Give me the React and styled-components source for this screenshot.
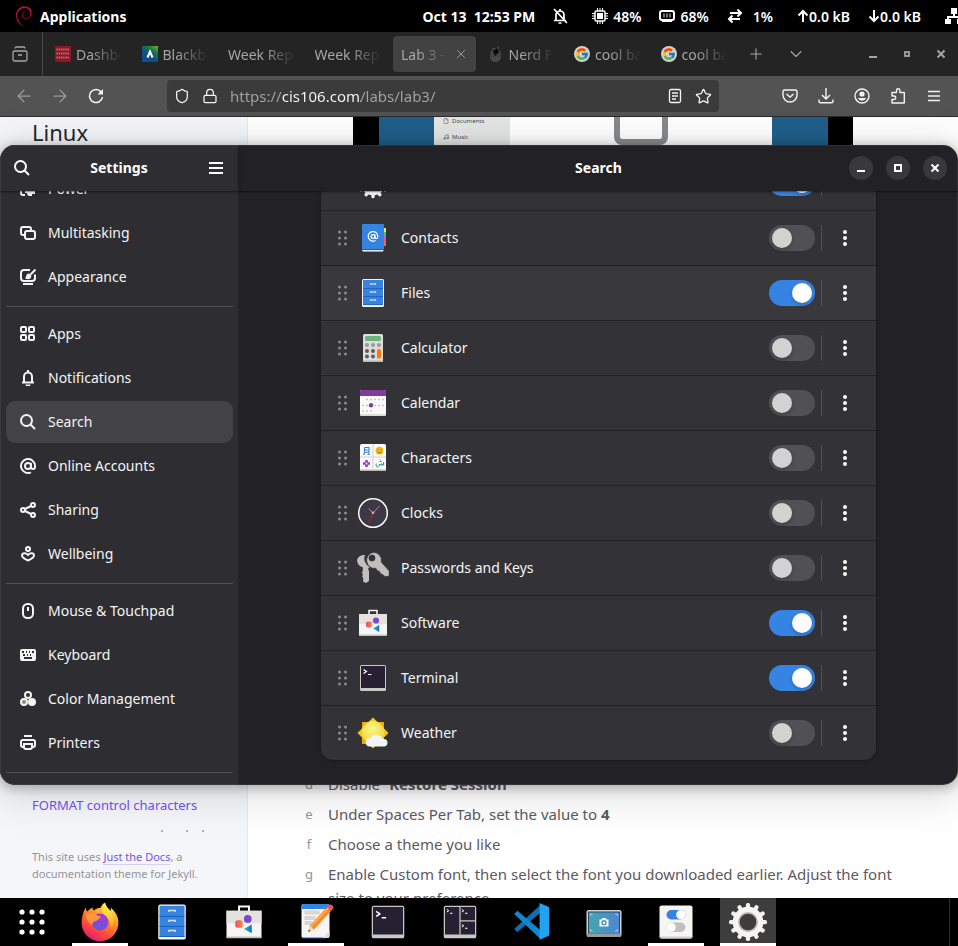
import React from 'react';
import styled, { createGlobalStyle, css } from 'styled-components';
import { ArrowLeft, ArrowRight, Shield, Lock, Star, Plus, ChevronDown, X, File, Music } from 'lucide-react';
import { SiDebian } from 'react-icons/si';
import { FcGoogle } from 'react-icons/fc';

const GlobalStyle = createGlobalStyle`
  * { box-sizing: border-box; }
  body { margin: 0; background: #000; font-family: "Noto Sans", sans-serif; font-size: 14px; }
  button { font: inherit; color: inherit; background: none; border: 0; padding: 0; cursor: pointer; }
  a { color: inherit; text-decoration: none; }
  ul, ol { list-style: none; margin: 0; padding: 0; }
  h1, h2, p { margin: 0; }
  svg { display: block; flex: none; }
`;

/* ---------- Desktop ---------- */

const Desktop = styled.div`
  position: relative;
  display: flex;
  flex-direction: column;
  height: 100vh;
  overflow: hidden;
`;

const TopBar = styled.header`
  display: flex;
  flex: none;
  align-items: center;
  height: 32px;
  padding-left: 14px;
  overflow: hidden;
  background: #000;
  color: #fff;
  font-weight: 600;
  white-space: nowrap;
`;

const Activities = styled.button`
  display: flex;
  align-items: center;
  gap: 6px;
  font-weight: 700;
`;

const Clock = styled.time`
  margin-left: auto;
  font-weight: 700;
  white-space: pre;
`;

const Indicators = styled.div`
  display: flex;
  align-items: center;
  gap: 18px;
  margin-left: ${(p) => p.$before}px;
`;

const Indicator = styled.span`
  display: flex;
  align-items: center;
  gap: ${(p) => p.$gap ?? 5}px;
`;

const NetworkIndicator = styled.div`
  width: 13px;
  margin-left: 24px;
  overflow: hidden;
`;

/* ---------- Browser ---------- */

const Browser = styled.section`
  display: flex;
  flex: 1;
  flex-direction: column;
  min-height: 0;
  background: #fff;
`;

const TabStrip = styled.div`
  display: flex;
  flex: none;
  align-items: center;
  height: 44px;
  background: #242424;
  color: #a5a5a5;
`;

const FirefoxView = styled.button`
  display: flex;
  align-items: center;
  align-self: stretch;
  justify-content: center;
  width: 43px;
  padding-right: 3px;
  border-right: 1px solid #484848;
`;

const Tabs = styled.div`
  display: flex;
  flex: 1;
  min-width: 0;
  padding-left: 2px;
`;

const Tab = styled.button`
  display: flex;
  flex: 1 1 0;
  align-items: center;
  gap: 5px;
  min-width: 0;
  height: 36px;
  margin: 0 2px;
  padding: 0 8px;
  border-radius: 4px;
  background: ${(p) => (p.$active ? '#424242' : 'transparent')};
`;

const TabTitle = styled.span`
  flex: 1;
  min-width: 0;
  overflow: hidden;
  text-align: left;
  white-space: nowrap;
  mask-image: linear-gradient(to left, transparent 0, #000 32px);
`;

const StripButton = styled.button`
  display: flex;
  align-items: center;
  justify-content: center;
  width: ${(p) => p.$width}px;
  height: 36px;
`;

const StripControls = styled.div`
  display: flex;
  flex: none;
  gap: 2px;
`;

const WindowButtons = styled.div`
  display: flex;
  flex: none;
  margin-left: 41px;
`;

const NavBar = styled.div`
  display: flex;
  flex: none;
  align-items: center;
  height: 41px;
  padding: 0 6px;
  border-bottom: 1px solid #2b2b2b;
  background: #535353;
  color: #f4f4f4;
`;

const ToolButton = styled.button`
  display: flex;
  align-items: center;
  justify-content: center;
  width: 36px;
  height: 32px;
  opacity: ${(p) => (p.$dim ? 0.45 : 1)};
`;

const AddressBar = styled.div`
  display: flex;
  flex: 1;
  align-items: center;
  gap: 12px;
  height: 32px;
  margin: 0 53px;
  padding: 0 7px;
  border-radius: 4px;
  background: #3b3b3b;
`;

const AddressInput = styled.input`
  flex: 1;
  min-width: 0;
  padding: 0;
  border: 0;
  outline: 0;
  background: linear-gradient(90deg, #a3a3a3 52px, #fbfbfe 52px, #fbfbfe 131px, #a3a3a3 131px);
  -webkit-background-clip: text;
  background-clip: text;
  color: transparent;
  font: inherit;
  font-size: 15px;
`;

/* ---------- Web page ---------- */

const WebPage = styled.div`
  display: flex;
  flex: 1;
  min-height: 0;
  overflow: hidden;
`;

const SiteSidebar = styled.aside`
  display: flex;
  flex: none;
  flex-direction: column;
  width: 248px;
  padding: 0 32px;
  border-right: 1px solid #e9e8f0;
  background: #f5f6fa;
`;

const SiteTitle = styled.h2`
  color: #27262b;
  font-size: 22px;
  font-weight: 400;
  line-height: 30px;
`;

const SiteNav = styled.nav`
  display: flex;
  flex: 1;
  flex-direction: column;
  justify-content: flex-end;
  min-height: 0;
  color: #7253ed;
  font-size: 13px;
  line-height: 20px;
  white-space: nowrap;
`;

const NavCut = styled.svg`
  margin-top: 15px;
`;

const SiteFooter = styled.footer`
  flex: none;
  padding: 16px 0;
  color: #959396;
  font-size: 11px;
  line-height: 17px;
  white-space: nowrap;
`;

const FooterLink = styled.a`
  border-bottom: 1px solid #d5d0ee;
  color: #7253ed;
`;

const Article = styled.main`
  flex: 1;
  min-width: 0;
  padding: 0 48px 0 57px;
  color: #5c5962;
  font-size: 15px;
  line-height: 24px;
`;

const Figure = styled.figure`
  display: flex;
  width: 500px;
  height: 640px;
  margin: 0 0 15px 48px;
  background: #000;
`;

const Wallpaper = styled.div`
  flex: 0 0 ${(p) => p.$width}px;
  margin-left: ${(p) => p.$before ?? 0}px;
  background: #1f5f8a;
`;

const FigureFiles = styled.div`
  flex: 0 0 76px;
  padding: 0 9px;
  background: #e4e6e5;
  color: #4a4a4a;
  font-size: 6px;
  line-height: 8px;
`;

const FigurePlace = styled.div`
  display: flex;
  align-items: center;
  gap: 3px;
  margin-bottom: 8px;
`;

const FigureSheet = styled.div`
  display: flex;
  flex: 0 0 262px;
  justify-content: center;
  background: #fff;
`;

const FigureFrame = styled.div`
  width: 54px;
  height: 28px;
  border: 6px solid #87898a;
  border-top: 0;
  border-radius: 0 0 8px 8px;
`;

const Steps = styled.ol`
  padding-left: 23px;
`;

const Step = styled.li`
  display: grid;
  grid-template-columns: 0 1fr;
  margin-bottom: 6px;
`;

const StepMark = styled.span`
  display: flex;
  justify-content: center;
  width: 8px;
  margin-left: -23px;
  color: #959396;
  font-size: 13px;
`;

/* ---------- Settings window ---------- */

const SettingsWindow = styled.section`
  position: absolute;
  top: 145px;
  right: 0;
  bottom: 161px;
  left: 0;
  display: flex;
  overflow: hidden;
  border-radius: 15px;
  background: #222226;
  color: #fff;
`;

const WindowShadow = styled.div`
  position: absolute;
  top: 145px;
  right: 0;
  bottom: 161px;
  left: 0;
  border-radius: 15px;
  box-shadow: 0 2px 12px 1px rgba(0, 0, 0, 0.28), 0 6px 40px 8px rgba(0, 0, 0, 0.12);
`;

const WindowEdge = styled.div`
  position: absolute;
  inset: 0;
  border-radius: 15px;
  box-shadow: inset 0 0 0 1px rgba(255, 255, 255, 0.07);
  pointer-events: none;
`;

const Sidebar = styled.aside`
  display: flex;
  flex: 0 0 239px;
  flex-direction: column;
  border-right: 1px solid #252529;
  background: #2e2e32;
`;

const Pane = styled.div`
  display: flex;
  flex: 1;
  flex-direction: column;
  min-width: 0;
`;

const HeaderBar = styled.header`
  position: relative;
  z-index: 1;
  display: grid;
  flex: none;
  grid-template-columns: 1fr auto 1fr;
  align-items: center;
  height: 46px;
  padding: 0 ${(p) => p.$side}px;
  box-shadow: 0 1px 1px rgba(0, 0, 0, 0.3), 0 2px 4px rgba(0, 0, 0, 0.12);
`;

const HeaderTitle = styled.h1`
  grid-column: 2;
  padding-bottom: 2px;
  font-size: 14px;
  font-weight: 700;
`;

const HeaderButton = styled.button`
  display: flex;
  align-items: center;
  justify-content: center;
  width: 34px;
  height: 34px;
  justify-self: ${(p) => p.$side};
`;

const WindowControls = styled.div`
  display: flex;
  gap: 13px;
  justify-self: end;
`;

const RoundButton = styled.button`
  display: flex;
  align-items: center;
  justify-content: center;
  width: 24px;
  height: 24px;
  border-radius: 50%;
  background: #39393c;
`;

const scrolledToEnd = css`
  display: flex;
  flex: 1;
  flex-direction: column;
  justify-content: flex-end;
  min-height: 0;
  overflow: hidden;
`;

const NavScroller = styled.nav`
  ${scrolledToEnd}
  padding: 0 5px 12px 6px;
`;

const NavGroup = styled.ul`
  display: grid;
  flex: none;
  gap: 2px;
  padding: 6px 0 8px;
  border-bottom: 1px solid #505054;
`;

const NavLink = styled.a`
  display: flex;
  align-items: center;
  gap: 12px;
  height: 42px;
  padding: 0 14px;
  border-radius: 9px;
  background: ${(p) => (p.$active ? '#434347' : 'transparent')};
  color: #f4f4f4;
`;

const NavText = styled.span`
  padding-bottom: 2px;
`;

const PaneScroller = styled.div`
  ${scrolledToEnd}
  align-items: center;
  padding: 0 24px 25px;
`;

const ResultList = styled.ul`
  flex: none;
  width: 100%;
  max-width: 555px;
  overflow: hidden;
  border-radius: 12px;
  background: #333337;
  box-shadow: 0 0 0 1px rgba(0, 0, 6, 0.1), 0 1px 3px 1px rgba(0, 0, 6, 0.1);
`;

const ResultRow = styled.li`
  display: flex;
  align-items: center;
  height: 55px;
  padding: 0 14px;
  background: ${(p) => (p.$hover ? '#39393d' : 'transparent')};
  & + & { border-top: 1px solid #212125; }
`;

const DragHandle = styled.button`
  display: flex;
  justify-content: center;
  width: 16px;
  margin-right: 6px;
  color: #8b8b8e;
  cursor: grab;
`;

const AppIcon = styled.svg`
  width: 32px;
  height: 32px;
`;

const RowLabel = styled.label`
  flex: 1;
  margin-left: 12px;
  padding-bottom: 2px;
  color: #f4f4f4;
`;

const Switch = styled.input`
  appearance: none;
  display: flex;
  flex: none;
  align-items: center;
  width: 46px;
  height: 26px;
  margin: 0;
  padding: 3px;
  border-radius: 13px;
  background: #515155;
  &::before {
    content: '';
    width: 20px;
    height: 20px;
    border-radius: 50%;
    background: #d2d2d2;
    box-shadow: 0 2px 4px rgba(0, 0, 6, 0.2);
  }
  &:checked { background: #3584e4; justify-content: flex-end; }
  &:checked::before { background: #fff; }
`;

const RowRule = styled.span`
  width: 1px;
  height: 26px;
  margin: 0 6px;
  background: #505054;
`;

const MenuButton = styled.button`
  display: flex;
  align-items: center;
  justify-content: center;
  width: 34px;
  height: 34px;
`;

/* ---------- Dock ---------- */

const Dock = styled.footer`
  display: flex;
  flex: none;
  gap: 16px;
  height: 48px;
  padding-right: 8px;
  background: #000;
`;

const DockButton = styled.button`
  display: flex;
  align-items: center;
  justify-content: center;
  width: 56px;
  height: 48px;
  border-bottom: 3px solid ${(p) => (p.$running ? '#fff' : 'transparent')};
  border-top: 3px solid ${(p) => (p.$focused ? '#3d3d3d' : 'transparent')};
  background: ${(p) => (p.$focused ? '#3d3d3d' : 'transparent')};
  background-clip: padding-box;
`;

const ShowAppsButton = styled(DockButton)`
  padding-left: 8px;
`;

const DockIcon = styled.svg`
  width: 40px;
  height: 40px;
`;

const DockEnd = styled.span`
  width: 1px;
  margin-left: auto;
  background: #2b2b2b;
`;

/* ---------- Symbolic icons, 16 x 16 ---------- */

const Sym = ({ children, size = 16, w = 2 }) => (
  <svg width={size} height={size} viewBox="0 0 16 16" fill="none" stroke="currentColor" strokeWidth={w} aria-hidden="true">
    {children}
  </svg>
);

const SearchSym = () => <Sym><circle cx="6.5" cy="6.5" r="5.5" /><path d="M10.5 10.5 15 15" /></Sym>;
const HamburgerSym = () => <Sym><path d="M1 3h14M1 8h14M1 13h14" /></Sym>;
const MinimizeSym = () => <Sym><path d="M4 11h8" /></Sym>;
const MaximizeSym = () => <Sym><rect x="5" y="5" width="6" height="6" /></Sym>;
const CloseSym = () => <Sym><path d="m4.5 4.5 7 7m0-7-7 7" /></Sym>;

const navIcons = {
  power: <Sym><path d="M4 2H3a2 2 0 0 0-2 2v8a2 2 0 0 0 2 2h2M9 2h2" /><path d="M5 11h2a4 4 0 0 1 4-3v2h4M11 12h4" /><path d="M7 10h5v5h-3a3 3 0 0 1-2-3z" fill="currentColor" stroke="none" /></Sym>,
  multitasking: <Sym><rect x="5" y="6" width="10" height="8" rx="2" /><path d="M4 10H3a2 2 0 0 1-2-2V4a2 2 0 0 1 2-2h6a2 2 0 0 1 2 2v1" /></Sym>,
  appearance: <Sym><path d="M10 1H4a3 3 0 0 0-3 3v5a3 3 0 0 0 3 3h8a3 3 0 0 0 3-3V5.500" /><path d="M3 15h10" /><path d="M15.500.5 10.500 5.500" /><path d="M5 9.500c1.500-.5.500-4.500 3.500-5a2.800 2.800 0 0 1 2.800 2.500c0 3.300-3.300 4-6.300 2.500z" fill="currentColor" stroke="none" /></Sym>,
  apps: <Sym><rect x="1" y="1" width="5" height="5" rx="1" /><rect x="9" y="1" width="5" height="5" rx="1" /><rect x="1" y="9" width="5" height="5" rx="1" /><rect x="9" y="9" width="5" height="5" rx="1" /></Sym>,
  notifications: <Sym><path d="M2 12.500h12" /><path d="M4 12V6.500a4 4 0 0 1 8 0V12" /><path d="M8 0v2" /><path d="M5.500 14.500h5a2.500 2 0 0 1-5 0z" fill="currentColor" stroke="none" /></Sym>,
  search: <SearchSym />,
  accounts: <Sym><circle cx="8" cy="8" r="3" /><path d="M11 5v4a1.500 1.500 0 0 0 4 0V8a7 7 0 1 0-4 6.300" /></Sym>,
  sharing: <Sym><circle cx="3" cy="8" r="2" /><circle cx="13" cy="3" r="2" /><circle cx="13" cy="13" r="2" /><path d="m5 7 6-3M5 9l6 3" /></Sym>,
  wellbeing: <Sym><circle cx="8" cy="3" r="2" /><path d="M8 14.500c-3-1.500-6-2.500-6-5 0-3 4-3 6-.5 2-2.500 6-2.500 6 .5 0 2.500-3 3.500-6 5z" /></Sym>,
  mouse: <Sym><rect x="3" y="1" width="10" height="14" rx="4.500" /><path d="M8 4v4" /></Sym>,
  keyboard: <Sym w={1.5}><path fillRule="evenodd" stroke="none" fill="currentColor" d="M2 2h12a2 2 0 0 1 2 2v8a2 2 0 0 1-2 2H2a2 2 0 0 1-2-2V4c0-1.100.9-2 2-2zM2 4v2h2V4zm4 0v2h1V4zm3 0v2h1V4zm3 0v2h2V4zM3 7v2h2V7zm4 0v2h1V7zm3 0v2h1V7zM4 10v2h8v-2z" /></Sym>,
  color: <Sym><circle cx="8" cy="4" r="3" /><circle cx="4" cy="11" r="3" fill="#8b8b8e" /><circle cx="12" cy="11" r="4" fill="currentColor" stroke="none" /></Sym>,
  printers: <Sym><path d="M4 1h8M4 12H3a2 2 0 0 1-2-2V7a2 2 0 0 1 2-2h10a2 2 0 0 1 2 2v3a2 2 0 0 1-2 2h-1" /><path d="M4 9h8v3a2 2 0 0 1-2 2H6a2 2 0 0 1-2-2z" /></Sym>,
};

/* ---------- Application artwork, 32 x 32 ---------- */

const Gear = () => (
  <g>
    <g fill="#f2f1ef">
      {Array.from({ length: 12 }, (_, i) => (
        <rect key={i} x="14.300" y="0.800" width="3.400" height="6" rx="1.400" transform={`rotate(${i * 30} 16 16)`} />
      ))}
    </g>
    <circle cx="16" cy="16" r="9.500" fill="none" stroke="#f6f5f4" strokeWidth="5.500" />
    <circle cx="16" cy="16" r="7.300" fill="#3d3d3d" stroke="#b9b7b3" strokeWidth="1.300" />
  </g>
);

const FilesArt = () => (
  <g>
    <rect x="5" y="2" width="22" height="28" rx="1.500" fill="#f6f5f4" />
    <path d="M6 3h20v25H6z" fill="#3584e4" />
    <path d="M6 11.500h20M6 19.500h20M6 27.600h20" stroke="#1a5fb4" strokeWidth=".8" />
    <path d="M13.500 8V6.800h5V8M13.500 16v-1.200h5V16M13.500 24v-1.200h5V24" stroke="#deddda" strokeWidth="1.200" fill="none" />
  </g>
);

const SoftwareArt = () => (
  <g>
    <defs>
      <linearGradient id="swBall" x2="0" y2="1"><stop offset="0" stopColor="#9141ac" /><stop offset="1" stopColor="#5b53f0" /></linearGradient>
      <linearGradient id="swBox"><stop offset="0" stopColor="#f5486a" /><stop offset="1" stopColor="#ff8a3c" /></linearGradient>
      <linearGradient id="swCone"><stop offset="0" stopColor="#1fc8b4" /><stop offset="1" stopColor="#1a63e0" /></linearGradient>
    </defs>
    <path d="M12 8V3.500h8V8" fill="none" stroke="#f6f5f4" strokeWidth="1.600" />
    <path d="M2 7h28v21.500H2z" fill="#f6f5f4" />
    <path d="M2 7h28v10H2z" fill="#e3e2df" />
    <path d="M2 27.500h28V29H2z" fill="#c4c2bd" />
    <circle cx="19" cy="13.500" r="3.100" fill="url(#swBall)" />
    <rect x="9" y="14.500" width="6" height="6" rx="2" fill="url(#swBox)" />
    <path d="M16 21.500l6.200-3.500v7z" fill="url(#swCone)" />
  </g>
);

const TerminalArt = ({ split }) => (
  <g>
    <rect x="3" y="3" width="26" height="26" rx="1.500" fill="#c9c8c4" />
    <path d="M4 4h24v22H4z" fill="#272032" />
    <g fill="none" stroke="#fff">
      {split ? (
        <>
          <path d="M16 4v22M16 15h12" stroke="#c9c8c4" />
          <path d="m5.500 6 1.500 1-1.500 1M8 9h2M17.500 6l1.500 1-1.500 1M20 9h2M17.500 18l1.500 1-1.500 1M20 21h2" strokeWidth=".8" />
        </>
      ) : (
        <path d="m6.500 7.500 3 2-3 2M11 12.500h3.500" strokeWidth="1.200" />
      )}
    </g>
  </g>
);

const appArt = {
  settings: <Gear />,
  contacts: (
    <g>
      <path d="M26 6h3v5h-3z" fill="#f8e45c" /><path d="M26 10h3v5h-3z" fill="#33d17a" />
      <path d="M26 14h3v5h-3z" fill="#c061cb" /><path d="M26 18h3v6h-3z" fill="#f66151" />
      <rect x="5" y="2" width="22" height="27.500" rx="1" fill="#3584e4" />
      <path d="M5 28h21v1.500H6z" fill="#deebfa" /><path d="M5 27h21.500v1H5z" fill="#1a5fb4" />
      <g fill="none" stroke="#fff" strokeWidth="1.200"><circle cx="16" cy="14.500" r="1.900" /><path d="M18 12.500v3c0 1.500 2.800 1.500 2.800-1a4.800 4.800 0 1 0-2.300 4" /></g>
    </g>
  ),
  files: <FilesArt />,
  calculator: (
    <g>
      <rect x="6" y="2" width="20" height="28" rx="1.500" fill="#deddda" /><path d="M6 28.500h20V30H6z" fill="#b9b7b3" />
      <rect x="8" y="4" width="16" height="5" rx="1.500" fill="#6db380" />
      <g fill="#9a9996"><circle cx="10" cy="13" r="2" /><circle cx="16" cy="13" r="2" /><circle cx="22" cy="13" r="2" /></g>
      <g fill="#5e5c64"><circle cx="10" cy="19" r="2" /><circle cx="16" cy="19" r="2" /><circle cx="10" cy="24.500" r="2" /><circle cx="16" cy="24.500" r="2" /></g>
      <rect x="20" y="17" width="4" height="9.500" rx="1.500" fill="#ff7800" />
    </g>
  ),
  calendar: (
    <g>
      <rect x="3" y="3" width="26" height="26" rx="1.500" fill="#fafafa" /><path d="M3 27.500h26v1H3z" fill="#c0bfbc" />
      <path d="M3 9V4.500A1.500 1.500 0 0 1 4.500 3h23A1.500 1.500 0 0 1 29 4.500V9z" fill="#813d9c" />
      <path d="M9 12.500h19M5 18.500h23M5 24h10" stroke="#c9c8c6" strokeWidth="1.600" strokeDasharray="2 2" />
      <circle cx="14" cy="18.300" r="2.200" fill="#813d9c" />
    </g>
  ),
  characters: (
    <g>
      <rect x="3" y="2" width="26" height="27" rx="1.500" fill="#fafafa" /><path d="M3 27.500h26V29H3z" fill="#b9b7b3" />
      <path d="M16 2v26M3 15h26" stroke="#d4d3d0" />
      <path d="M7.500 5.500H12v7h-1.500M7.500 5.500v5q0 2-1.500 2M7.500 8H12M7.500 10.300H12" stroke="#3584e4" strokeWidth="1.100" fill="none" />
      <circle cx="22.500" cy="8.700" r="3.900" fill="#f5b911" /><path d="M20.500 10q2 2 4 0M21 7.300v1M24 7.300v1" stroke="#a66b00" fill="none" />
      <path d="M9.500 18v7M6 21.500h7" stroke="#9141ac" strokeWidth="2.600" /><circle cx="9.500" cy="21.500" r=".9" fill="#fff" />
      <path d="M19.300 21.500c-1 4 2 4.500 3 1.500l.5-1 .5 1h1.500v-1.500l.3 1.500h1.500v-3" stroke="#26a269" fill="none" /><path d="M22.500 19.500h2M23.200 18h.8" stroke="#26a269" />
    </g>
  ),
  clocks: (
    <g>
      <circle cx="16" cy="16" r="14.300" fill="#3d3846" stroke="#fafafa" strokeWidth="1.500" />
      <path d="M16 16 11.500 11.500M16 16l6.500-7" stroke="#9a9996" /><path d="m16.500 15-4 9.500" stroke="#c01c28" /><circle cx="16" cy="15.700" r="1.300" fill="#c0bfbc" />
    </g>
  ),
  keys: (
    <g stroke="none" fill="#c0bfbd">
      <path d="M8.500 3C3 2.500-.5 6 .2 9.500c.6 3 2.500 5 5.600 5.800V19l-1 1.500 1 1.500-.5 2.500 1 2.500-.3 2.500 3 1.500 3-2V19l-1-2 1.500-2A9.500 9.500 0 0 1 8 3z" />
      <path fillRule="evenodd" stroke="#333337" strokeWidth=".8" d="M16.500.3a8 8 0 0 1 7.800 9.800L32.300 19v5.200l-4.300.5-2.500-2.300-2-.5-1-2.500-2.500-.8-1-2.200A8 8 0 1 1 16.500.3zM15 3a3 3 0 1 0 0 6 3 3 0 0 0 0-6z" />
    </g>
  ),
  software: <SoftwareArt />,
  terminal: <TerminalArt />,
  weather: (
    <g>
      <defs><radialGradient id="sun" cx=".45" cy=".35"><stop offset="0" stopColor="#fbf38a" /><stop offset="1" stopColor="#f3e04b" /></radialGradient></defs>
      <path d="M5 5h22v22H5z" fill="#f5a70a" /><path d="M16 .5 31.500 16 16 31.500.5 16z" fill="#f6c815" />
      <circle cx="16" cy="15" r="11" fill="url(#sun)" />
      <path d="M13 29.500a4 4 0 0 1-.5-8c1-.3 1.500-.8 2-1.800a6.500 6.500 0 0 1 10 .5c.8 1.200 1.500 1.500 3 1.800a3.800 3.800 0 0 1-.5 7.500z" fill="#f0f5fb" />
    </g>
  ),
};

/* ---------- Dock artwork ---------- */

const GridArt = () => (
  <svg width="26" height="26" viewBox="0 0 26 26" fill="#fff" aria-hidden="true">
    {[3, 13, 23].map((y) => [3, 13, 23].map((x) => <circle key={`${x}-${y}`} cx={x} cy={y} r="2.600" />))}
  </svg>
);

const FirefoxArt = () => (
  <g>
    <defs>
      <linearGradient id="fxBody" x1=".8" y1="0" x2=".25" y2="1"><stop offset="0" stopColor="#fff44f" /><stop offset=".35" stopColor="#ff9a1f" /><stop offset=".7" stopColor="#ff4a3a" /><stop offset="1" stopColor="#e3157b" /></linearGradient>
      <linearGradient id="fxGlobe" x1=".5" y1="0" x2=".4" y2="1"><stop offset="0" stopColor="#b136d9" /><stop offset="1" stopColor="#5a5ae0" /></linearGradient>
      <linearGradient id="fxTail" x1=".4" y1="0" x2=".6" y2="1"><stop offset="0" stopColor="#fff24e" /><stop offset="1" stopColor="#ffb02e" /></linearGradient>
    </defs>
    <path fill="url(#fxBody)" d="M5 5c0 2 .5 3 1.500 4C8 7.500 9.500 6 11.500 5.500c0 1.500.5 2 1.500 2.500C14.500 6.500 16.500 5.500 19 5.500c1-2.500 2.500-4 4-5 .5 4 3 5.500 5.500 8 .5-1.500.5-2.500 0-3.500 4.500 4 7.500 9 7.500 14.500A17.500 17.500 0 1 1 1 20c0-5 1.500-11 4-15z" />
    <path fill="url(#fxTail)" d="M23.500.5c.5 4.500 4 6 6 9.500 3 5 2.500 11-1 15 1-5-1-8-4-10-4-2.500-6-8-1-14.500z" />
    <circle cx="18.500" cy="19" r="8" fill="url(#fxGlobe)" />
    <path fill="#ff9640" d="M5.500 11c4-1.500 9-1 10.500 2 1.500.5 3 .5 3.500 1-1 2-3.500 2.500-4.500 4-1.500 0-3 .5-4.500 4C7.500 19.500 5 16 5.500 11z" />
    <path d="M13.500 9.500C15.500 7.500 18 6.500 19 6.500c-1 1.500-1 2.500-.5 4z" fill="#ffb43c" />
  </g>
);

const EditorArt = () => (
  <g>
    <rect x="2.500" y="2" width="28" height="34" rx="2" fill="#f6f5f4" /><path d="M2.500 6V4a2 2 0 0 1 2-2h24a2 2 0 0 1 2 2v3h-28z" fill="#3584e4" />
    <path d="M5.500 10.500h15M5.500 16h11M5.500 21h8" stroke="#d8d6d3" strokeWidth="4" />
    <path d="M3.500 36h23" stroke="#1a5fb4" /><path d="M24 36l6.500-7v5a2 2 0 0 1-2 2z" fill="#deddda" />
    <path d="m11 23.500 17-18.500 4 4L15 27.500l-5.500 2z" fill="#ff8a1c" /><path d="m28 5 1.500-1.500a2.500 2.500 0 0 1 4 4L32 9z" fill="#e05a5a" />
    <path d="m11 23.500 4 4-5.500 2z" fill="#f3dcb4" /><path d="m9.800 27.500 1.500 1.500-2 .8z" fill="#222" /><path d="M12.500 24 29 6.500" stroke="#ffb066" strokeWidth="1.400" />
  </g>
);

const CodeArt = () => (
  <g>
    <path d="m3 26 3 2.800 22-18.500V3z" fill="#0f6fb4" />
    <path d="m3 12 3-2.800 22 18.500V36z" fill="#1187cf" />
    <path d="m26.500 2 8 3.500a2 2 0 0 1 1 1.800v23.400a2 2 0 0 1-1 1.800l-8 3.500z" fill="#22a3f1" />
  </g>
);

const CameraArt = () => (
  <g>
    <rect x="2.500" y="8" width="35" height="27" rx="2" fill="#d3d1ce" /><path d="M3 31.500h34V33a2 2 0 0 1-2 2H5a2 2 0 0 1-2-2z" fill="#9a9996" />
    <rect x="4" y="9.500" width="32" height="22" fill="#2b4a72" /><rect x="5" y="10.500" width="30" height="20.500" fill="url(#shot)" />
    <defs><linearGradient id="shot"><stop offset="0" stopColor="#43a6ac" /><stop offset="1" stopColor="#4c86d6" /></linearGradient></defs>
    <path d="M6.500 14v-2h2M31 12h2.500v2M6.500 27v2h2M31 29h2.500v-2" fill="none" stroke="#a9cde9" />
    <path d="M15.500 17.500h2l1-1.500h3l1 1.500h2v7h-9z" fill="#fff" /><circle cx="20" cy="20.800" r="2" fill="none" stroke="#4a8fc8" strokeWidth="1.400" />
  </g>
);

const TweaksArt = () => (
  <g>
    <rect x="3.500" y="3.500" width="33" height="33" rx="2" fill="#f6f5f4" /><path d="M3.500 34.500h33a2 2 0 0 1-2 2h-29a2 2 0 0 1-2-2z" fill="#d0cfcb" />
    <rect x="10.500" y="8" width="19" height="9.500" rx="4.700" fill="#3584e4" /><circle cx="25" cy="12.700" r="4.700" fill="#fff" stroke="#deddda" strokeWidth=".5" />
    <rect x="10.500" y="20.500" width="19" height="9.500" rx="4.700" fill="#c0bfbc" /><circle cx="15" cy="25.200" r="4.700" fill="#fff" stroke="#deddda" strokeWidth=".5" />
  </g>
);

const dockApps = [
  { name: 'Firefox', art: <FirefoxArt />, box: '0 0 37 38', running: true },
  { name: 'Files', art: <FilesArt />, box: '0 0 32 32' },
  { name: 'Software', art: <SoftwareArt />, box: '0 0 32 32' },
  { name: 'Text Editor', art: <EditorArt />, box: '-3 0 40 40', running: true },
  { name: 'Terminal', art: <TerminalArt />, box: '0 0 32 32' },
  { name: 'Terminator', art: <TerminalArt split />, box: '0 0 32 32' },
  { name: 'Visual Studio Code', art: <CodeArt />, box: '1 1 37 37' },
  { name: 'Screenshot', art: <CameraArt /> },
  { name: 'Tweaks', art: <TweaksArt />, running: true },
  { name: 'Settings', art: <Gear />, box: '0 0 32 32', running: true, focused: true },
];

/* ---------- Tab icons ---------- */

const CollegeIcon = () => (
  <svg width="16" height="16" viewBox="0 0 16 16" aria-hidden="true">
    <path d="M0 0h16v16H0z" fill="#8c1722" />
    <path d="M1.500 3.500h13M1.500 7.500h13M1.500 11.500h13" stroke="#c0686e" strokeWidth="1.800" strokeDasharray="1.500 .7" />
  </svg>
);

const BlackboardIcon = () => (
  <svg width="16" height="16" viewBox="0 0 16 16" aria-hidden="true">
    <defs><linearGradient id="bb" x1="1" y1="0" x2=".3" y2="1"><stop offset="0" stopColor="#8fa81c" /><stop offset=".35" stopColor="#12784e" /><stop offset=".7" stopColor="#124c8a" /></linearGradient></defs>
    <path d="M0 0h16v16H0z" fill="url(#bb)" /><path d="m5.500 11.500 2.500-6 2.500 6" fill="none" stroke="#fff" strokeWidth="2" />
  </svg>
);

const NerdIcon = () => (
  <svg width="16" height="16" viewBox="0 0 16 16" aria-hidden="true">
    <path d="M5 2h3l3-2v4l2 2v7l-3 3H5l-3-3V6z" fill="#414141" /><path d="M5 5l4-3 2 4-4 4z" fill="#0a0a0a" /><path d="M4 12h8M5 14h6" stroke="#666" strokeDasharray="1 1" />
  </svg>
);

const GoogleBadge = styled.span`
  display: flex;
  align-items: center;
  justify-content: center;
  width: 16px;
  height: 16px;
  border-radius: 50%;
  background: #d0d0d0;
`;

const GoogleIcon = () => <GoogleBadge><FcGoogle size={14} /></GoogleBadge>;

const tabs = [
  { title: 'Dashboard', icon: <CollegeIcon /> },
  { title: 'Blackboard', icon: <BlackboardIcon /> },
  { title: 'Week Report' },
  { title: 'Week Report' },
  { title: 'Lab 3 - Terminal', active: true },
  { title: 'Nerd Fonts', icon: <NerdIcon /> },
  { title: 'cool bash', icon: <GoogleIcon /> },
  { title: 'cool bash', icon: <GoogleIcon /> },
];

const navGroups = [
  [['power', 'Power'], ['multitasking', 'Multitasking'], ['appearance', 'Appearance']],
  [['apps', 'Apps'], ['notifications', 'Notifications'], ['search', 'Search'], ['accounts', 'Online Accounts'], ['sharing', 'Sharing'], ['wellbeing', 'Wellbeing']],
  [['mouse', 'Mouse & Touchpad'], ['keyboard', 'Keyboard'], ['color', 'Color Management'], ['printers', 'Printers']],
];

const apps = [
  ['settings', 'Settings', true], ['contacts', 'Contacts', false], ['files', 'Files', true],
  ['calculator', 'Calculator', false], ['calendar', 'Calendar', false], ['characters', 'Characters', false],
  ['clocks', 'Clocks', false], ['keys', 'Passwords and Keys', false], ['software', 'Software', true],
  ['terminal', 'Terminal', true], ['weather', 'Weather', false],
];

function SystemBar() {
  return (
    <TopBar>
      <Activities><SiDebian size={20} color="#c00a4a" />Applications</Activities>
      <Clock>Oct 13  12:53 PM</Clock>
      <Indicators $before={17}>
        <Sym w={1.700}><path d="M2 12.500h12M4 12V7a4 4 0 0 1 8 0v5M8 1v2M6.500 15h3M2 1l13 14" /></Sym>
      </Indicators>
      <Indicators $before={24}>
        <Indicator>
          <Sym w={1.500}><rect x="3" y="3" width="10" height="10" rx="1.500" /><path d="M5 5h6v6H5z" fill="currentColor" stroke="none" /><path d="M5.500 0v3M8 0v3M10.500 0v3M5.500 13v3M8 13v3M10.500 13v3M0 5.500h3M0 8h3M0 10.500h3M13 5.500h3M13 8h3M13 10.500h3" strokeWidth="1" /></Sym>
          48%
        </Indicator>
        <Indicator>
          <Sym><rect x="1" y="3" width="14" height="9" rx="2" /><path d="M5 5.500v4M8 5.500v4M11 5.500v4" strokeWidth="1.500" stroke="#999" /><path d="M3 13h10" /></Sym>
          68%
        </Indicator>
        <Indicator $gap={10}><Sym><path d="M3 5h11M10.500 1.500 14 5l-3.500 3.500M13 11H2M5.500 7.500 2 11l3.500 3.500" /></Sym>1%</Indicator>
      </Indicators>
      <Indicators $before={24}>
        <Indicator $gap={0}><svg width="12" height="16" viewBox="0 0 12 16" fill="none" stroke="currentColor" strokeWidth="2" aria-hidden="true"><path d="M6 14V3M1.500 7.500 6 3l4.500 4.500" /></svg>0.0 kB</Indicator>
        <Indicator $gap={0}><svg width="12" height="16" viewBox="0 0 12 16" fill="none" stroke="currentColor" strokeWidth="2" aria-hidden="true"><path d="M6 2v11M1.500 8.500 6 13l4.500-4.500" /></svg>0.0 kB</Indicator>
      </Indicators>
      <NetworkIndicator>
        <svg width="18" height="18" viewBox="0 0 18 18" fill="#fff" aria-hidden="true"><path d="M6 1h6v6H6zM0 12h6v5H0zM12 12h6v5h-6zM8 7h2v2h6v3h-2v-1H4v1H2V9h6z" /></svg>
      </NetworkIndicator>
    </TopBar>
  );
}

function BrowserWindow() {
  return (
    <Browser>
      <TabStrip>
        <FirefoxView aria-label="Firefox View"><Sym w={1.300}><rect x="1" y="5" width="14" height="10" rx="1.500" /><path d="M3 2.500c0-1 .5-1.500 1.500-1.500h7c1 0 1.500.5 1.500 1.500M6 9h4" /></Sym></FirefoxView>
        <Tabs role="tablist">
          {tabs.map((t, i) => (
            <Tab key={i} role="tab" aria-selected={!!t.active} $active={t.active}>
              {t.icon}
              <TabTitle>{t.title}</TabTitle>
              {t.active && <X size={14} strokeWidth={1.500} />}
            </Tab>
          ))}
        </Tabs>
        <StripControls>
          <StripButton $width={38} aria-label="New tab"><Plus size={18} strokeWidth={1.500} /></StripButton>
          <StripButton $width={38} aria-label="List all tabs"><ChevronDown size={20} strokeWidth={1.300} /></StripButton>
        </StripControls>
        <WindowButtons>
          <StripButton $width={34} aria-label="Minimize"><MinimizeSym /></StripButton>
          <StripButton $width={34} aria-label="Maximize"><Sym w={1.800}><rect x="6" y="6" width="4" height="4" /></Sym></StripButton>
          <StripButton $width={34} aria-label="Close"><CloseSym /></StripButton>
        </WindowButtons>
      </TabStrip>
      <NavBar>
        <ToolButton $dim aria-label="Back"><ArrowLeft size={20} strokeWidth={1.500} /></ToolButton>
        <ToolButton $dim aria-label="Forward"><ArrowRight size={20} strokeWidth={1.500} /></ToolButton>
        <ToolButton aria-label="Reload"><Sym w={1.500}><path d="M13.500 4.500A6.500 6.500 0 1 0 14.500 9" /><path d="M15 1v5.500H9.500z" fill="currentColor" stroke="none" /></Sym></ToolButton>
        <AddressBar>
          <Shield size={16} strokeWidth={1.900} /><Lock size={16} strokeWidth={1.900} />
          <AddressInput aria-label="Address" defaultValue="https://cis106.com/labs/lab3/" />
          <Sym w={1.300}><rect x="2.500" y="1.500" width="11" height="13" rx="1.500" /><path d="M5 5h6M5 8h6M5 11h4" /></Sym>
          <Star size={17} strokeWidth={1.800} />
        </AddressBar>
        <ToolButton aria-label="Pocket"><Sym w={1.400}><path d="M2.500 2h11A1.500 1.500 0 0 1 15 3.500V7A7 7 0 0 1 1 7V3.500A1.500 1.500 0 0 1 2.500 2z" /><path d="m4.500 6 3.500 3 3.500-3" /></Sym></ToolButton>
        <ToolButton aria-label="Downloads"><Sym w={1.400}><path d="M8 0v11M4 7l4 4 4-4M1 11.500v1.700c0 .8.700 1.500 1.500 1.500h11c.8 0 1.500-.7 1.500-1.500v-1.700" /></Sym></ToolButton>
        <ToolButton aria-label="Account"><Sym w={1.400}><circle cx="8" cy="8" r="7" /><circle cx="8" cy="6" r="2.600" fill="currentColor" stroke="none" /><path d="M3.800 10h8.400A5 5 0 0 1 8 12.800 5 5 0 0 1 3.800 10z" fill="currentColor" stroke="none" /></Sym></ToolButton>
        <ToolButton aria-label="Extensions"><Sym w={1.400}><path d="M2 15v-3.500h2a1.700 1.700 0 0 0 0-3.500H2V4.500h4.500v-2a1.700 1.700 0 0 1 3.400 0v2h4.400V15z" strokeLinejoin="round" /></Sym></ToolButton>
        <ToolButton aria-label="Menu"><Sym w={1.300}><path d="M2 3.500h12M2 8h12M2 12.500h12" /></Sym></ToolButton>
      </NavBar>
      <WebPage>
        <SiteSidebar>
          <SiteTitle>Linux</SiteTitle>
          <SiteNav>
            <a href="#format">FORMAT control characters</a>
            <NavCut width="172" height="2" aria-hidden="true"><path d="M129 1h2M154 1h2M170 1h2" stroke="#7253ed" /></NavCut>
          </SiteNav>
          <SiteFooter>This site uses <FooterLink href="#jtd">Just the Docs</FooterLink>, a<br />documentation theme for Jekyll.</SiteFooter>
        </SiteSidebar>
        <Article>
          <Figure>
            <Wallpaper $width={55} $before={26} />
            <FigureFiles>
              <FigurePlace><File size={6} />Documents</FigurePlace>
              <FigurePlace><Music size={6} />Music</FigurePlace>
            </FigureFiles>
            <FigureSheet><FigureFrame /></FigureSheet>
            <Wallpaper $width={56} />
          </Figure>
          <Steps>
            <Step><StepMark>d</StepMark><span>Disable “<b>Restore Session</b>”</span></Step>
            <Step><StepMark>e</StepMark><span>Under Spaces Per Tab, set the value to <b>4</b></span></Step>
            <Step><StepMark>f</StepMark><span>Choose a theme you like</span></Step>
            <Step><StepMark>g</StepMark><span>Enable Custom font, then select the font you downloaded earlier. Adjust the font size to your preference</span></Step>
          </Steps>
        </Article>
      </WebPage>
    </Browser>
  );
}

function Settings() {
  return (
    <SettingsWindow>
      <Sidebar>
        <HeaderBar $side={5}>
          <HeaderButton $side="start" aria-label="Search settings"><SearchSym /></HeaderButton>
          <HeaderTitle>Settings</HeaderTitle>
          <HeaderButton $side="end" aria-label="Main menu"><HamburgerSym /></HeaderButton>
        </HeaderBar>
        <NavScroller>
          {navGroups.map((group, i) => (
            <NavGroup key={i}>
              {group.map(([icon, name]) => (
                <li key={name}>
                  <NavLink href={`#${icon}`} $active={icon === 'search'}>{navIcons[icon]}<NavText>{name}</NavText></NavLink>
                </li>
              ))}
            </NavGroup>
          ))}
        </NavScroller>
      </Sidebar>
      <Pane>
        <HeaderBar $side={11}>
          <HeaderTitle>Search</HeaderTitle>
          <WindowControls>
            <RoundButton aria-label="Minimize"><MinimizeSym /></RoundButton>
            <RoundButton aria-label="Maximize"><MaximizeSym /></RoundButton>
            <RoundButton aria-label="Close"><CloseSym /></RoundButton>
          </WindowControls>
        </HeaderBar>
        <PaneScroller>
          <ResultList>
            {apps.map(([id, name, on]) => (
              <ResultRow key={id} $hover={id === 'files'}>
                <DragHandle aria-label={`Move ${name}`}>
                  <svg width="10" height="16" viewBox="0 0 10 16" fill="currentColor" aria-hidden="true">
                    {[2, 8, 14].map((y) => [1.5, 7.5].map((x) => <circle key={`${x}-${y}`} cx={x} cy={y} r="1.500" />))}
                  </svg>
                </DragHandle>
                <AppIcon viewBox="0 0 32 32" aria-hidden="true">{appArt[id]}</AppIcon>
                <RowLabel htmlFor={`switch-${id}`}>{name}</RowLabel>
                <Switch id={`switch-${id}`} type="checkbox" role="switch" defaultChecked={on} />
                <RowRule />
                <MenuButton aria-label={`${name} options`}>
                  <svg width="4" height="16" viewBox="0 0 4 16" fill="#fff" aria-hidden="true"><circle cx="2" cy="2" r="2" /><circle cx="2" cy="8" r="2" /><circle cx="2" cy="14" r="2" /></svg>
                </MenuButton>
              </ResultRow>
            ))}
          </ResultList>
        </PaneScroller>
      </Pane>
      <WindowEdge />
    </SettingsWindow>
  );
}

function Taskbar() {
  return (
    <Dock>
      <ShowAppsButton aria-label="Show apps"><GridArt /></ShowAppsButton>
      {dockApps.map((app) => (
        <DockButton key={app.name} aria-label={app.name} $running={app.running} $focused={app.focused}>
          <DockIcon viewBox={app.box ?? '0 0 40 40'} aria-hidden="true">{app.art}</DockIcon>
        </DockButton>
      ))}
      <DockEnd />
    </Dock>
  );
}

export default function App() {
  return (
    <Desktop>
      <GlobalStyle />
      <SystemBar />
      <BrowserWindow />
      <WindowShadow />
      <Settings />
      <Taskbar />
    </Desktop>
  );
}
